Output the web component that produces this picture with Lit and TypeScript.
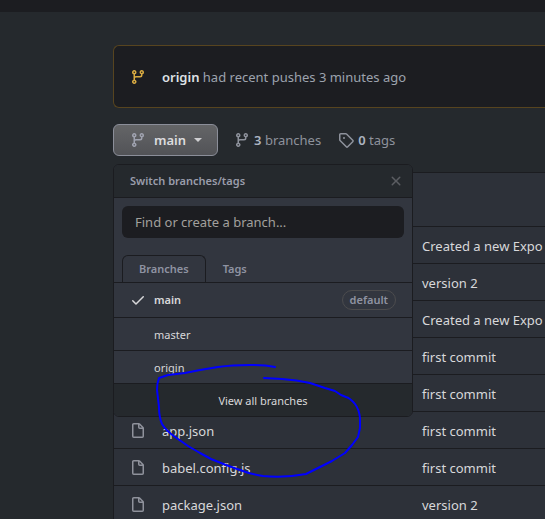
import { LitElement, html, css, svg, nothing } from "lit";
import { customElement, property, state } from "lit/decorators.js";
import { classMap } from "lit/directives/class-map.js";

const icons: Record<string, string> = {
  branch:
    "M11.75 2.5a.75.75 0 100 1.5.75.75 0 000-1.5zm-2.25.75a2.25 2.25 0 113 2.122V6A2.5 2.5 0 0110 8.5H6a1 1 0 00-1 1v1.128a2.251 2.251 0 11-1.5 0V5.372a2.25 2.25 0 111.5 0v1.836A2.492 2.492 0 016 7h4a1 1 0 001-1v-.628A2.25 2.25 0 019.5 3.25zM4.25 12a.75.75 0 100 1.5.75.75 0 000-1.5zM3.5 3.25a.75.75 0 111.5 0 .75.75 0 01-1.5 0z",
  file: "M3.75 1.5a.25.25 0 00-.25.25v11.5c0 .138.112.25.25.25h8.5a.25.25 0 00.25-.25V6H9.75A1.75 1.75 0 018 4.25V1.5H3.75zm5.75.56v2.19c0 .138.112.25.25.25h2.19L9.5 2.06zM2 1.75C2 .784 2.784 0 3.75 0h5.086c.464 0 .909.184 1.237.513l3.414 3.414c.329.328.513.773.513 1.237v8.086A1.75 1.75 0 0112.25 15h-8.5A1.75 1.75 0 012 13.25V1.75z",
  tag: "M2.5 7.775V2.75a.25.25 0 01.25-.25h5.025a.25.25 0 01.177.073l6.25 6.25a.25.25 0 010 .354l-5.025 5.025a.25.25 0 01-.354 0l-6.25-6.25a.25.25 0 01-.073-.177zm-1.5 0V2.75C1 1.784 1.784 1 2.75 1h5.025c.464 0 .91.184 1.238.513l6.25 6.25a1.75 1.75 0 010 2.474l-5.026 5.026a1.75 1.75 0 01-2.474 0l-6.25-6.25A1.75 1.75 0 011 7.775zM6 5a1 1 0 100 2 1 1 0 000-2z",
  check:
    "M13.78 4.22a.75.75 0 010 1.06l-7.25 7.25a.75.75 0 01-1.06 0L2.22 9.28a.75.75 0 011.06-1.06L6 10.94l6.72-6.72a.75.75 0 011.06 0z",
  close:
    "M3.72 3.72a.75.75 0 011.06 0L8 6.94l3.22-3.22a.75.75 0 111.06 1.06L9.06 8l3.22 3.22a.75.75 0 11-1.06 1.06L8 9.06l-3.22 3.22a.75.75 0 01-1.06-1.06L6.94 8 3.72 4.78a.75.75 0 010-1.06z",
};

@customElement("repo-icon")
class RepoIcon extends LitElement {
  @property() name = "file";
  static styles = css`
    :host { display: block; flex: none; width: 16px; height: 16px; }
    svg { display: block; fill: currentColor; }
  `;
  render() {
    return html`<svg width="16" height="16" viewBox="0 0 16 16" aria-hidden="true">
      ${svg`<path fill-rule="evenodd" d=${icons[this.name]}></path>`}
    </svg>`;
  }
}

@customElement("branch-menu")
class BranchMenu extends LitElement {
  @state() private tab = "Branches";
  static styles = css`
    :host {
      display: block;
      box-sizing: border-box;
      width: 300px;
      overflow: hidden;
      border: 1px solid #1b1c20;
      border-radius: 6px;
      background: #32363f;
      color: #d8d8da;
      font-size: 12px;
      line-height: 16px;
    }
    button, input, a { font: inherit; color: inherit; }
    button { border: 0; padding: 0; background: none; }
    .head {
      display: flex;
      align-items: center;
      justify-content: space-between;
      height: 32px;
      padding: 0 8px 0 16px;
      background: #25292d;
      border-bottom: 1px solid #1b1c20;
      color: #9a9dab;
      font-size: 11px;
      font-weight: 600;
      line-height: 18px;
    }
    .close { color: #5b5d62; }
    .filter { padding: 8px; }
    .filter input {
      display: block;
      box-sizing: border-box;
      width: 100%;
      height: 32px;
      padding: 0 13px;
      border: 0;
      border-radius: 6px;
      background: #1c1d21;
      font-size: 13px;
    }
    .filter input::placeholder { color: #a2a09d; opacity: 1; }
    .tabs {
      display: flex;
      margin-top: 9px;
      padding: 0 8px;
      border-bottom: 1px solid #1b1c20;
    }
    .tab {
      height: 27px;
      padding: 0 16px;
      border: 1px solid transparent;
      border-bottom: 0;
      color: #8f93a2;
      font-size: 11px;
      font-weight: 600;
    }
    .tab.on { border-color: #1b1c20; border-radius: 6px 6px 0 0; }
    .item {
      display: flex;
      align-items: center;
      gap: 8px;
      box-sizing: border-box;
      width: 100%;
      height: 33px;
      padding: 2px 16px 0;
      border-bottom: 1px solid #1b1c20;
      font-size: 11px;
      text-align: left;
    }
    .item.current { height: 35px; padding-top: 0; font-weight: 600; }
    .mark { width: 16px; height: 16px; }
    .name { flex: 1; }
    .pill {
      padding: 1px 7px;
      border: 1px solid #4c4c4e;
      border-radius: 10px;
      color: #8f93a2;
    }
    .all {
      display: block;
      height: 32px;
      line-height: 34px;
      background: #25292d;
      text-align: center;
      text-decoration: none;
      font-size: 11px;
    }
  `;
  render() {
    return html`
      <div class="head">
        <span>Switch branches/tags</span>
        <button class="close" aria-label="Close"><repo-icon name="close"></repo-icon></button>
      </div>
      <div class="filter">
        <input type="text" aria-label="Find or create a branch" placeholder="Find or create a branch..." />
      </div>
      <div class="tabs" role="tablist">
        ${["Branches", "Tags"].map(
          (t) => html`<button
            role="tab"
            aria-selected=${t === this.tab}
            class=${classMap({ tab: true, on: t === this.tab })}
            @click=${() => (this.tab = t)}
          >${t}</button>`,
        )}
      </div>
      ${["main", "master", "origin"].map(
        (b) => html`<button class=${classMap({ item: true, current: b === "main" })}>
          <span class="mark">${b === "main" ? html`<repo-icon name="check"></repo-icon>` : nothing}</span>
          <span class="name">${b}</span>
          ${b === "main" ? html`<span class="pill">default</span>` : nothing}
        </button>`,
      )}
      <a class="all" href="#branches">View all branches</a>
    `;
  }
}

const files = [
  ["", "Created a new Expo"],
  ["", "version 2"],
  ["", "Created a new Expo"],
  ["", "first commit"],
  ["", "first commit"],
  ["app.json", "first commit"],
  ["babel.config.js", "first commit"],
  ["package.json", "version 2"],
];

@customElement("app-root")
class AppRoot extends LitElement {
  static styles = css`
    :host {
      display: block;
      position: relative;
      height: 100vh;
      overflow: hidden;
      background: #25292d;
      color: #d8d8da;
      font: 13px/20px "Noto Sans", "Open Sans", sans-serif;
    }
    a { color: inherit; text-decoration: none; }
    .top { height: 12px; background: #1c1d21; }
    main { padding: 33px 0 0 113px; }
    .notice {
      display: flex;
      align-items: center;
      gap: 16px;
      height: 61px;
      padding-left: 16px;
      border: 1px solid #57441f;
      border-right: 0;
      border-radius: 6px 0 0 6px;
      background: #1c1d21;
      color: #9da3ae;
    }
    .notice repo-icon { color: #d9ab42; }
    .notice strong { color: #dfe1e5; }
    strong { font-weight: 600; }
    .bar { display: flex; align-items: center; margin: 16px 0; }
    .picker { position: relative; margin-right: 16px; }
    .trigger {
      display: flex;
      align-items: center;
      gap: 8px;
      height: 32px;
      padding: 0 15px 0 16px;
      border: 1px solid #8b8e99;
      border-radius: 6px;
      background: linear-gradient(#646567, #525357);
      color: #dcdcde;
      font: inherit;
      font-weight: 600;
    }
    .trigger repo-icon { color: #a0a3b0; }
    .caret {
      border: 4px solid transparent;
      border-top-color: #cfcfd2;
      border-bottom: 0;
    }
    branch-menu { position: absolute; top: 40px; left: 0; z-index: 1; }
    .stat {
      display: flex;
      align-items: center;
      gap: 4px;
      margin-right: 17px;
      color: #8e929c;
    }
    .stat strong { color: #adb4c0; }
    table {
      width: 100%;
      table-layout: fixed;
      border-spacing: 0;
      border: 1px solid #1b1c20;
      border-right: 0;
      background: #2d3139;
    }
    td { height: 34px; padding: 2px 0 0; border-top: 1px solid #1b1c20; }
    th { height: 53px; padding: 0; }
    .col-name { width: 308px; }
    .file { display: flex; align-items: center; gap: 16px; padding-left: 16px; }
    .file repo-icon { color: #8f929c; }
    .message { white-space: nowrap; }
    .ink {
      position: absolute;
      top: 360px;
      left: 150px;
      z-index: 2;
      pointer-events: none;
      fill: none;
      stroke: #0000ff;
      stroke-width: 2;
      stroke-linecap: round;
      stroke-linejoin: round;
    }
  `;
  render() {
    return html`
      <div class="top"></div>
      <main>
        <div class="notice">
          <repo-icon name="branch"></repo-icon>
          <span><strong>origin</strong> had recent pushes 3 minutes ago</span>
        </div>
        <div class="bar">
          <div class="picker">
            <button class="trigger" aria-expanded="true">
              <repo-icon name="branch"></repo-icon>main<span class="caret"></span>
            </button>
            <branch-menu></branch-menu>
          </div>
          <a class="stat" href="#branches"><repo-icon name="branch"></repo-icon><span><strong>3</strong> branches</span></a>
          <a class="stat" href="#tags"><repo-icon name="tag"></repo-icon><span><strong>0</strong> tags</span></a>
        </div>
        <table>
          <thead>
            <tr><th class="col-name"></th><th></th></tr>
          </thead>
          <tbody>
            ${files.map(
              ([name, message]) => html`<tr>
                <td>
                  ${name
                    ? html`<div class="file"><repo-icon name="file"></repo-icon><a href="#file">${name}</a></div>`
                    : nothing}
                </td>
                <td class="message"><a href="#commit">${message}</a></td>
              </tr>`,
            )}
          </tbody>
        </table>
      </main>
      <svg class="ink" width="220" height="125" viewBox="150 360 220 125" aria-hidden="true">
        <path
          d="M275 367Q265 365 250 365Q232 365 218 367L200 370L185 373L168 375L159 378Q157 383 157 390L159 407Q159 417 162 424Q166 431 178 439L188 446L200 453L211 459L226 465L240 470Q250 474 263 476Q285 478 306 474L320 467L332 461L345 453L352 445L358 437L360 428V418Q359 409 355 404Q350 398 346 397L341 395L335 391L325 388L310 383Q297 380 282 379L264 378"
        ></path>
      </svg>
    `;
  }
}
